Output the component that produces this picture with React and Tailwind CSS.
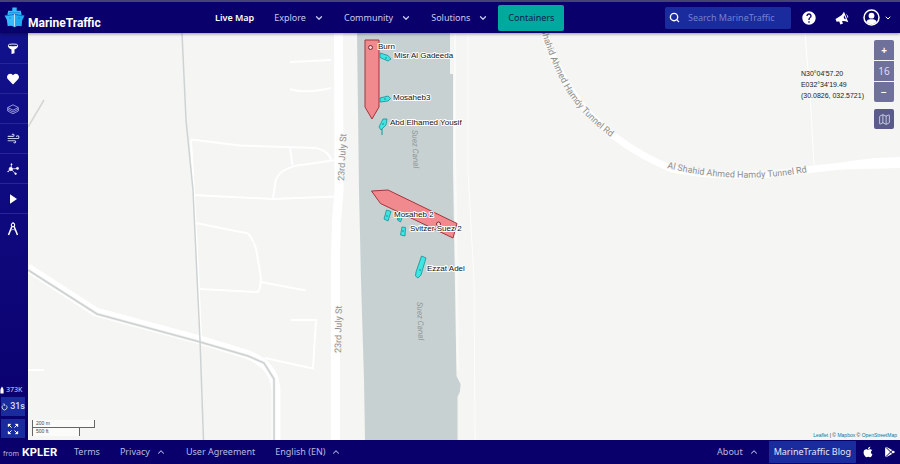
import React, { useState } from "react";
import { ChevronDown, ChevronUp, Search, Wind, Map as MapIcon } from "lucide-react";
import { FaApple, FaHeart } from "react-icons/fa";
import { IoLogoGooglePlaystore } from "react-icons/io5";
import { MdHelp } from "react-icons/md";

const LogoIcon = () => (
  <svg viewBox="0 0 21 21" className="h-[21px] w-[21px] shrink-0">
    <path d="M8.3 0.5h4.4v3.2h4.2l.6 4.1 2.9.9-2.2 4.1-.9 6.4q-3.4-1-6.8 1-3.400-2-6.800-1l-.9-6.400L.6 8.700l2.900-.9.6-4.100h4.200z" fill="#35bdfb" />
    <path d="M10.500 7v13.200q3.400-2 6.800-1l.9-6.400 2.200-4.100z" fill="#1aabf0" />
    <path d="M.8 8.900l9.700-1.500 9.700 1.500" fill="none" stroke="#0b5cb8" strokeWidth=".8" />
    <path d="M5 5.700h11" stroke="#0b7fd6" strokeWidth=".7" />
    <path d="M10.500 7v12.500" stroke="#d8f2ff" strokeWidth=".8" />
    <circle cx="6" cy="11" r=".6" fill="#0b4aa5" />
    <circle cx="15" cy="11" r=".6" fill="#0b4aa5" />
  </svg>
);

const FilterIcon = () => (
  <svg viewBox="0 0 12 12" className="h-3 w-3">
    <path d="M.8 2.500Q1 5 4.500 6.500V11l3 -.8V6.500Q11 5 11.200 2.500z" fill="#fff" />
    <ellipse cx="6" cy="2.400" rx="4.900" ry="1.400" fill="#12128c" stroke="#fff" strokeWidth=".9" />
  </svg>
);

const LayersIcon = () => (
  <svg viewBox="0 0 12 12" className="h-3 w-3" fill="none" stroke="#b4b6e6" strokeWidth=".8" strokeLinejoin="round">
    <path d="M6 1.800L11.300 4.500 6 7.200.7 4.500z" />
    <path d="M.7 4.500V8L6 10.700 11.300 8V4.500M.7 6.200L6 9l5.300-2.800" />
  </svg>
);

const DensityIcon = () => (
  <svg viewBox="0 0 12 12" className="h-3 w-3" stroke="#fff" strokeWidth=".7" fill="#fff">
    <path d="M4 6L4.500 1.200M4 6L11 5.400M4 6L8.700 11M4 6L1 8.500" />
    <circle cx="3.800" cy="6" r="1.700" />
    <circle cx="4.500" cy="1.300" r=".6" />
    <circle cx="10.500" cy="5.400" r="1.100" />
    <circle cx="8.600" cy="10.700" r=".8" />
    <circle cx="1.100" cy="8.500" r=".4" />
  </svg>
);

const PlayIcon = () => (
  <svg viewBox="0 0 12 12" className="h-3 w-3">
    <path d="M3 1.200v9.600l7-4.800z" fill="#fff" />
  </svg>
);

const CompassIcon = () => (
  <svg viewBox="0 0 12 14" className="h-3.5 w-3" fill="none" stroke="#fff">
    <path d="M4.900 4.500L1.500 13M7.100 4.500L10.500 13" strokeWidth="1.500" />
    <path d="M3 8.500q3 -2.200 6 0" strokeWidth=".6" />
    <circle cx="6" cy="3" r="1.700" strokeWidth="1.100" />
    <path d="M6 0v1.300" />
  </svg>
);

const MegaphoneIcon = () => (
  <svg viewBox="0 0 14 14" className="h-3.5 w-3.5">
    <path d="M9 .8L13.300 11.300Q9 9.200 5.300 10.300L1.600 10.800.5 8l3.300-2Q7.500 4.300 9 .8z" fill="#fff" />
    <path d="M4 9.800l1.400 3.700 2.600-.9-1.200-3z" fill="#fff" />
    <path d="M9.300 4.200q-.2 1-.7 1.700l.9 2q.8 0 1.400.3z" fill="#0a006c" />
    <path d="M11.300 3.600q1.900.8 1.400 3" stroke="#fff" fill="none" strokeWidth=".9" />
  </svg>
);

const UserIcon = () => (
  <svg viewBox="0 0 17 17" className="h-[17px] w-[17px]">
    <circle cx="8.500" cy="8.500" r="7.500" fill="none" stroke="#fff" strokeWidth="1.500" />
    <circle cx="8.500" cy="6.700" r="2.900" fill="#fff" />
    <path d="M3.200 13q1-2.700 3.500-2.700h3.600q2.500 0 3.500 2.700-2.300 2.300-5.300 2.300t-5.300-2.300z" fill="#fff" />
  </svg>
);

const ShipIcon = () => (
  <svg viewBox="0 0 5 9" className="h-2 w-1">
    <path d="M2.500 0q2 2.500 2 4.500V9h-4V4.500q0-2 2-4.500z" fill="#fff" />
  </svg>
);

const RefreshIcon = () => (
  <svg viewBox="0 0 8 8" className="h-2 w-2" fill="none" stroke="#d9dcf5">
    <path d="M2.500 2A2.800 2.800 0 1 0 5.500 2" />
    <path d="M2 .7h2v2" strokeWidth=".9" />
  </svg>
);

const ExpandIcon = () => (
  <svg viewBox="0 0 12 12" className="h-3 w-3" fill="#fff" stroke="#fff" strokeWidth="1">
    <path d="M1.500 1.500l3 3M10.500 1.500l-3 3M1.500 10.500l3-3M10.500 10.500l-3-3" />
    <path d="M1 1h3L1 4zM11 1H8L11 4zM1 11h3L1 8zM11 11H8L11 8z" strokeWidth=".3" />
  </svg>
);

const tools = [
  { name: "Filters", icon: <FilterIcon /> },
  { name: "Favourites", icon: <FaHeart size={12} color="#fff" /> },
  { name: "Layers", icon: <LayersIcon /> },
  { name: "Weather", icon: <Wind size={13} strokeWidth={2} className="text-[#c5c7ee]" /> },
  { name: "Density maps", icon: <DensityIcon /> },
  { name: "Playback", icon: <PlayIcon /> },
  { name: "Measure", icon: <CompassIcon /> },
];

const tugs = [
  { points: "380,53 388,55.500 391,59 388,61 380,57.500", dot: [386, 58] },
  { points: "380,98 388,96 390.500,98.500 388,101 380,102", dot: [385, 99] },
  { points: "379,127 383,119 387,119 386,125 381,130", dot: [383, 124] },
  { points: "386.500,210 391,211.500 388,221 384,219", dot: [387, 216] },
  { points: "397.500,217 402,218 400.500,222 397.500,220", dot: [399, 219] },
  { points: "402,227 405.500,227.500 405,236 400.500,235", dot: [403, 231] },
  { points: "421.500,256 426,258 421,275 418,278 415.500,276 416,272", dot: [420, 270] },
];

const vesselLabels = [
  { name: "Burn", x: 378, y: 49 },
  { name: "Misr Al Gadeeda", x: 394, y: 58 },
  { name: "Mosaheb3", x: 393, y: 100 },
  { name: "Abd Elhamed Yousif", x: 390, y: 125 },
  { name: "Mosaheb 2", x: 394, y: 217 },
  { name: "Svitzer Suez 2", x: 410, y: 231 },
  { name: "Ezzat Adel", x: 427, y: 271 },
];

const MapCanvas = () => (
  <svg
    viewBox="28 33 872 407"
    preserveAspectRatio="xMidYMid slice"
    className="absolute inset-0 h-full w-full"
    role="img"
    aria-label="Map of the Suez Canal"
  >
    <rect x="28" y="33" width="872" height="407" fill="#f5f5f3" />

    {/* canal */}
    <path
      d="M357 33L359 190 361 280 364 380 365 440H457.500V397Q461 391 460.500 384L456.500 376 453 170V74H450V33z"
      fill="#c8d1d1"
    />

    {/* minor roads */}
    <g fill="none" stroke="#fff" strokeWidth="2" strokeLinejoin="round">
      <path d="M191 139.500L240 145.500 316 148Q329 151 331 160" />
      <path d="M191 139.500L198 270 201 338" />
      <path d="M290 148L292.500 165" />
      <path d="M336 160L305 164.500Q293 165 283 171 276 176 275.500 182L273 198" />
      <path d="M194 195L273 199 336 196.500" />
      <path d="M196 223L248 233.500Q255 241 257 254L260.500 275Q261.500 286 258 292L200 289" />
      <path d="M261 282L306 290.500" />
      <path d="M291 320H316L313 368.500 265 358" />
      <path d="M28 370H44" />
      <path d="M290 89Q304 94 331 88M331 60L290 62" />
    </g>
    <path d="M455 33V150L458 370" fill="none" stroke="#fafaf9" strokeWidth="2" />
    <path d="M468 33V170L474 280 475 440" fill="none" stroke="#fdfdfc" strokeWidth="1" />
    <path d="M805 33L811 110 814 165" fill="none" stroke="#fff" strokeWidth="1" />

    {/* 23rd July St */}
    <path d="M338.500 33L339 190Q335 230 335.500 270V440" fill="none" stroke="#fff" strokeWidth="9" />

    {/* dual road with the rail line in it */}
    <path
      d="M28 268L96 312 200 340 246 354Q276 365 276 392V440"
      fill="none"
      stroke="#fff"
      strokeWidth="9"
      strokeLinejoin="round"
    />
    <path
      d="M28 270L97 314 200 342 248 356 264 363 274 379V440"
      fill="none"
      stroke="#f1f2f0"
      strokeWidth="3"
    />
    <path
      d="M28 270L97 314 200 342 248 356 264 363 274 379V440"
      fill="none"
      stroke="#cdd1d1"
      strokeWidth="1.500"
    />
    <path d="M182 33L186 120 193 190 200 340 203.500 440" fill="none" stroke="#cdd3d3" strokeWidth="1.500" />
    <path d="M28 127L44 100" stroke="#d3d6d5" strokeWidth="1.500" />

    {/* tunnel road */}
    <path
      d="M542 26Q552 62 572 92 586 114 614 136 640 156 672 169 735 181 805 170L850 165 900 163"
      fill="none"
      stroke="#fff"
      strokeWidth="7"
    />
    <path d="M825 170L850 161 875 158 900 157V168z" fill="#fff" />
    <path id="tunnelNorth" d="M534 0Q544 52 566 90 582 116 611 137" fill="none" />
    <path id="tunnelEast" d="M667 168Q735 185 808 172" fill="none" />
    <g fontFamily="Roboto, sans-serif" fontSize="9" fill="#8e9090" stroke="#f7f7f6" strokeWidth="1.500" paintOrder="stroke">
      <text textAnchor="end">
        <textPath href="#tunnelNorth" startOffset="100%">Al Shahid Ahmed Hamdy Tunnel Rd</textPath>
      </text>
      <text>
        <textPath href="#tunnelEast">Al Shahid Ahmed Hamdy Tunnel Rd</textPath>
      </text>
      <text transform="translate(344 181) rotate(-87)">23rd July St</text>
      <text transform="translate(341 353) rotate(-89)">23rd July St</text>
    </g>
    <g fontFamily="Roboto, sans-serif" fontSize="8" fontStyle="italic" fill="#8f9899">
      <text transform="translate(412 130) rotate(88)">Suez Canal</text>
      <text transform="translate(417 302) rotate(88)">Suez Canal</text>
    </g>

    {/* large vessels */}
    <g fill="#f08a8e" stroke="#a3343c" strokeWidth="1">
      <path d="M365 40H379V107L372 119 365 107z" />
      <path d="M371.500 191L388 190 457 223.500 453 238 380.500 203.500z" />
    </g>
    <circle cx="370.500" cy="47.500" r="2" fill="#f6d5d3" stroke="#7a2d33" />
    <circle cx="438.500" cy="224" r="2" fill="#f6d5d3" stroke="#7a2d33" />

    {/* tugs */}
    <path d="M382 129v6" stroke="#178f93" />
    <g fill="#3ee6e3" stroke="#178f93" strokeWidth=".8">
      {tugs.map((tug) => (
        <g key={tug.points}>
          <polygon points={tug.points} />
          <circle cx={tug.dot[0]} cy={tug.dot[1]} r=".5" />
        </g>
      ))}
    </g>

    <g
      fontFamily="'Liberation Sans', sans-serif"
      fontSize="8"
      fill="#111"
      stroke="#fff"
      strokeWidth="2"
      strokeLinejoin="round"
      paintOrder="stroke"
    >
      {vesselLabels.map((label) => (
        <text key={label.name} x={label.x} y={label.y}>{label.name}</text>
      ))}
    </g>
  </svg>
);

const NavMenu = ({ label }) => (
  <button className="flex items-center gap-2 text-[#c9c9ec]">
    {label}
    <ChevronDown size={10} strokeWidth={3} />
  </button>
);

const FooterMenu = ({ label }) => (
  <button className="flex items-center gap-1.5">
    {label}
    <ChevronUp size={10} strokeWidth={2.5} />
  </button>
);

const Header = () => {
  const [query, setQuery] = useState("");

  return (
    <header className="relative z-10 flex h-[33px] shrink-0 items-center border-t-2 border-[#45436f] bg-[#0a006c] pr-2 pl-1 text-[9px] shadow-[0_1px_3px_rgba(0,0,0,0.4)]">
      <a href="#home" className="flex w-[211px] items-end gap-[3px]">
        <LogoIcon />
        <span className="font-['Roboto',sans-serif] text-[12px] leading-[10px] font-bold text-white">MarineTraffic</span>
      </a>
      <nav className="flex items-center gap-5">
        <a href="#map" className="font-semibold text-white">Live Map</a>
        <NavMenu label="Explore" />
        <NavMenu label="Community" />
        <NavMenu label="Solutions" />
        <button className="-ml-2.5 h-[26px] rounded-xs bg-[#00a99d] px-2.5 text-[#07224f]">Containers</button>
      </nav>
      <div className="ml-auto flex items-center">
        <label className="flex h-[22px] w-[126px] items-center gap-2 rounded-xs bg-[#1a2b9d] px-1">
          <Search size={11} strokeWidth={3} className="shrink-0 text-white" />
          <span className="sr-only">Search MarineTraffic</span>
          <input
            type="text"
            value={query}
            onChange={(e) => setQuery(e.target.value)}
            placeholder="Search MarineTraffic"
            className="w-full min-w-0 bg-transparent text-white outline-none placeholder:text-[#7580cd]"
          />
        </label>
        <button aria-label="Help" className="ml-2.5">
          <MdHelp size={16} color="#fff" />
        </button>
        <button aria-label="Announcements" className="ml-[18px]">
          <MegaphoneIcon />
        </button>
        <button aria-label="Account" className="ml-3.5 flex items-center gap-1 text-white">
          <UserIcon />
          <ChevronDown size={8} strokeWidth={3} />
        </button>
      </div>
    </header>
  );
};

const Sidebar = () => (
  <aside className="flex w-7 shrink-0 flex-col bg-linear-to-b from-[#11128c] to-[#0a006c] pt-px text-[#d9dcf5]">
    {tools.map((tool) => (
      <button
        key={tool.name}
        aria-label={tool.name}
        className="flex h-[30px] items-center justify-center border-b border-[#26269a] pr-0.5 nth-7:border-b-0"
      >
        {tool.icon}
      </button>
    ))}
    <div className="mt-auto flex flex-col gap-[3px] pr-[3px] pb-0.5">
      <div className="flex items-center gap-0.5 text-[7px] leading-[9px]">
        <ShipIcon />
        373K
      </div>
      <div className="ml-px flex h-[19px] items-center justify-center gap-0.5 bg-[#1a2b9d] font-['Roboto',sans-serif] text-[9px] font-medium">
        <RefreshIcon />
        31s
      </div>
      <button aria-label="Full screen" className="ml-px flex h-[19px] items-center justify-center bg-[#1a2b9d]">
        <ExpandIcon />
      </button>
    </div>
  </aside>
);

const MapArea = () => (
  <main className="relative min-w-0 flex-1 overflow-hidden">
    <MapCanvas />

    {/* cursor position and zoom */}
    <div className="absolute top-[7px] right-1.5 flex gap-2.5">
      <p className="pt-7 font-['Liberation_Sans',sans-serif] text-[7px] leading-[11px] text-[#222]">
        N30°04'57.20
        <br />
        E032°34'19.49
        <br />
        (30.0826, 032.5721)
      </p>
      <div className="flex w-5 flex-col gap-px text-[10px] leading-none text-[#dddff0]">
        <button aria-label="Zoom in" className="h-5 rounded-t-xs bg-[#70719a] font-bold text-white">+</button>
        <div className="flex h-5 items-center justify-center bg-[#70719a]">16</div>
        <button aria-label="Zoom out" className="h-5 rounded-b-xs bg-[#70719a] font-bold text-white">−</button>
        <button aria-label="Map style" className="mt-1.5 flex h-5 items-center justify-center rounded-xs bg-[#5a5b88]">
          <MapIcon size={13} strokeWidth={1.5} />
        </button>
      </div>
    </div>

    {/* scale bar */}
    <div className="absolute bottom-1 left-1 font-['Liberation_Sans',sans-serif] text-[5px] leading-[7px] text-[#444]">
      <div className="h-2 w-[63px] border border-t-0 border-[#666] bg-white/60 pl-[3px]">200 m</div>
      <div className="h-2 w-12 border-x border-[#666] bg-white/60 pl-[3px]">500 ft</div>
    </div>

    <p className="absolute right-[3px] bottom-px font-['Liberation_Sans',sans-serif] text-[5px] leading-[7px] text-[#333]">
      <a href="#leaflet" className="text-[#0078a8]">Leaflet</a> | © <a href="#mapbox" className="text-[#0078a8]">Mapbox</a> ©{" "}
      <a href="#osm" className="text-[#0078a8]">OpenStreetMap</a>
    </p>
  </main>
);

const Footer = () => (
  <footer className="flex h-6 shrink-0 items-center bg-[#0a006c] pr-1 pl-[3px] text-[9px] text-[#b9b9e6]">
    <span className="flex w-[71px] items-baseline gap-[3px] text-[7px]">
      from
      <span className="font-['Inter',sans-serif] text-[11px] font-bold text-white">KPLER</span>
    </span>
    <nav className="flex items-center gap-5">
      <a href="#terms">Terms</a>
      <FooterMenu label="Privacy" />
      <a href="#agreement">User Agreement</a>
      <FooterMenu label="English (EN)" />
    </nav>
    <div className="ml-auto flex items-center">
      <FooterMenu label="About" />
      <a href="#blog" className="ml-2.5 flex h-[22px] items-center bg-[#1a2b9d] px-[5px] text-[#e4e5fa]">MarineTraffic Blog</a>
      <a href="#ios" aria-label="App Store" className="ml-1.5">
        <FaApple size={12} color="#fff" />
      </a>
      <a href="#android" aria-label="Google Play" className="ml-2.5">
        <IoLogoGooglePlaystore size={12} color="#fff" />
      </a>
    </div>
  </footer>
);

const App = () => {
  return (
    <div className="flex h-screen flex-col overflow-hidden font-['Noto_Sans',sans-serif]">
      <Header />
      <div className="flex min-h-0 flex-1">
        <Sidebar />
        <MapArea />
      </div>
      <Footer />
    </div>
  );
};

export default App;
